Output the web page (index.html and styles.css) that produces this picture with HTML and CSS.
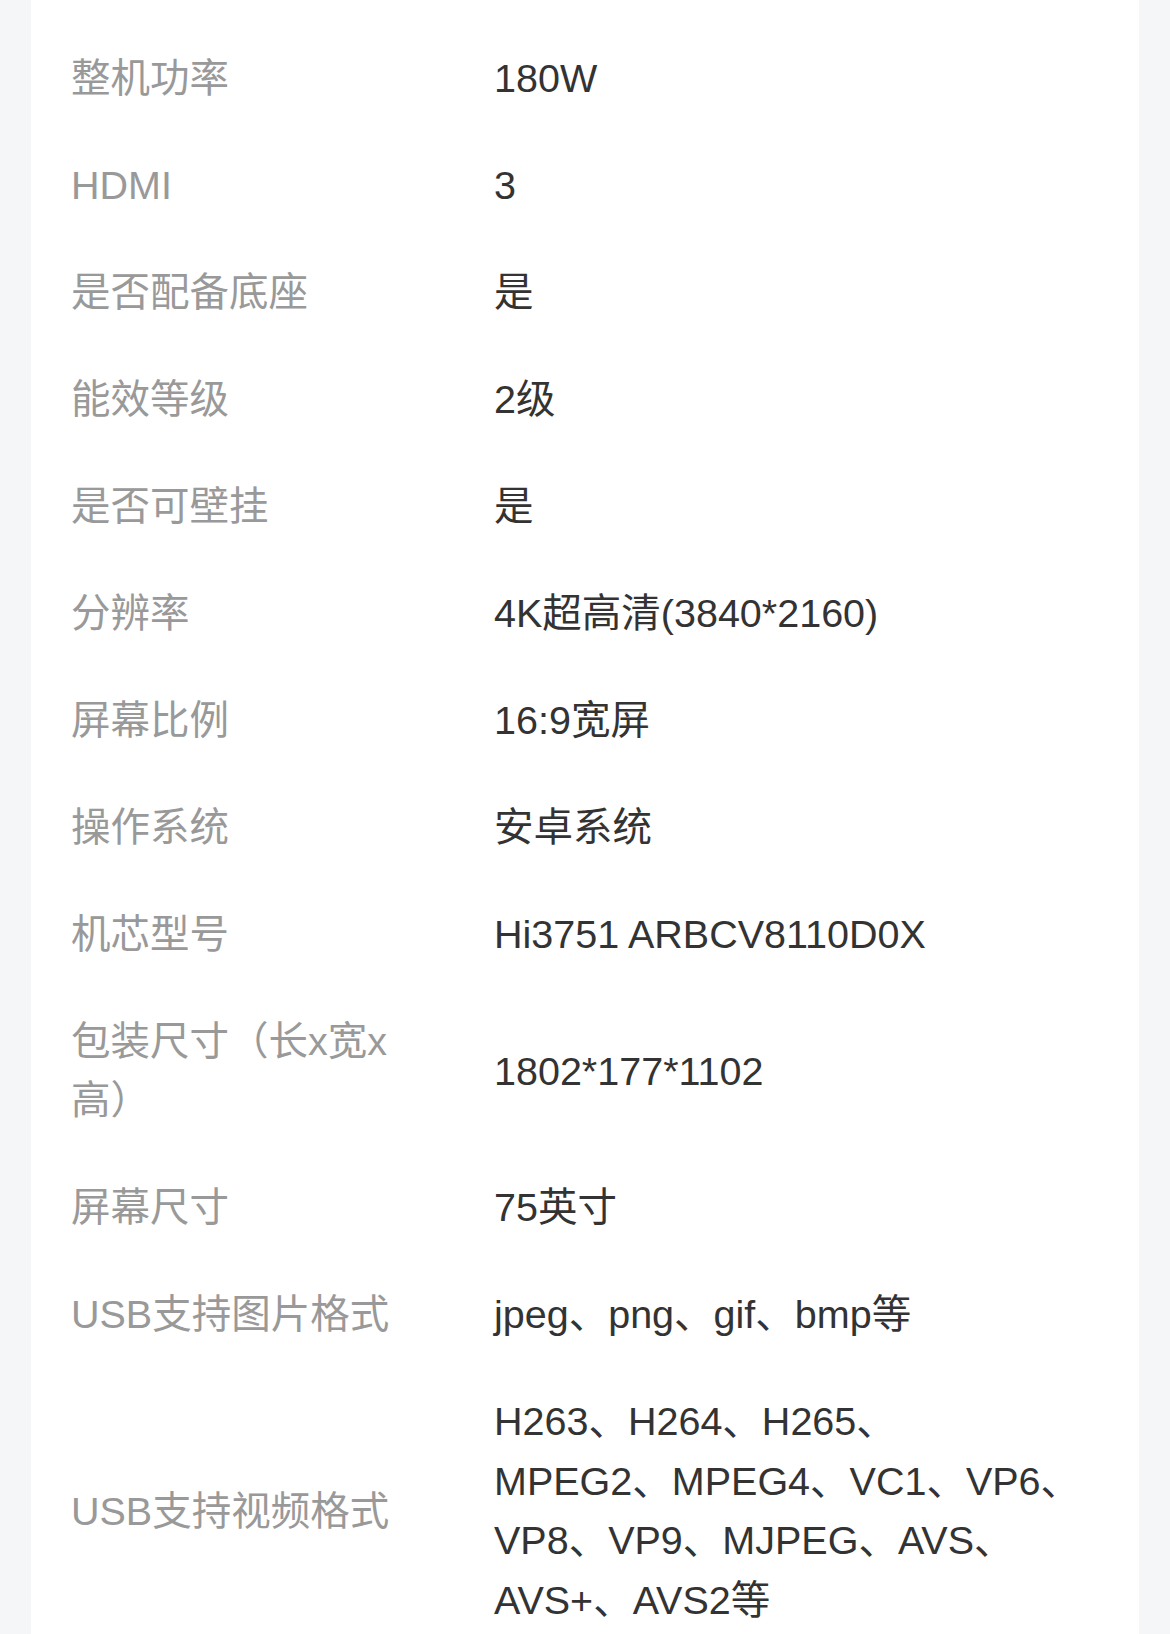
FILE: index.html
```html
<!DOCTYPE html>
<html lang="zh-CN">
<head>
<meta charset="utf-8">
<title>规格参数</title>
<link rel="stylesheet" href="styles.css">
</head>
<body>
<div class="card">
  <div class="row"><div class="label">整机功率</div><div class="value">180W</div></div>
  <div class="row"><div class="label">HDMI</div><div class="value">3</div></div>
  <div class="row"><div class="label">是否配备底座</div><div class="value">是</div></div>
  <div class="row"><div class="label">能效等级</div><div class="value">2级</div></div>
  <div class="row"><div class="label">是否可壁挂</div><div class="value">是</div></div>
  <div class="row"><div class="label">分辨率</div><div class="value">4K超高清(3840*2160)</div></div>
  <div class="row"><div class="label">屏幕比例</div><div class="value">16:9宽屏</div></div>
  <div class="row"><div class="label">操作系统</div><div class="value">安卓系统</div></div>
  <div class="row"><div class="label">机芯型号</div><div class="value">Hi3751 ARBCV8110D0X</div></div>
  <div class="row"><div class="label">包装尺寸（长x宽x高）</div><div class="value">1802*177*1102</div></div>
  <div class="row"><div class="label">屏幕尺寸</div><div class="value">75英寸</div></div>
  <div class="row"><div class="label">USB支持图片格式</div><div class="value">jpeg、png、gif、bmp等</div></div>
  <div class="row"><div class="label">USB支持视频格式</div><div class="value">H263、H264、H265、<br>MPEG2、MPEG4、VC1、VP6、<br>VP8、VP9、MJPEG、AVS、<br>AVS+、AVS2等</div></div>
</div>
</body>
</html>
```

FILE: styles.css
```css
html, body {
  margin: 0;
  padding: 0;
  background: #f5f6f8;
}

body {
  font-family: "Liberation Sans", "Noto Sans CJK SC", sans-serif;
  font-size: 39.5px;
  line-height: 59.5px;
  -webkit-font-smoothing: antialiased;
}

.card {
  margin: 0 31px;
  background: #ffffff;
  padding: 25px 40px 0;
  min-height: 1700px;
  box-sizing: border-box;
}

.row {
  display: grid;
  grid-template-columns: 340px 1fr;
  column-gap: 83px;
  align-items: center;
  padding: 23.75px 0;
}

.label {
  color: #999999;
}

.value {
  color: #333333;
}
```
